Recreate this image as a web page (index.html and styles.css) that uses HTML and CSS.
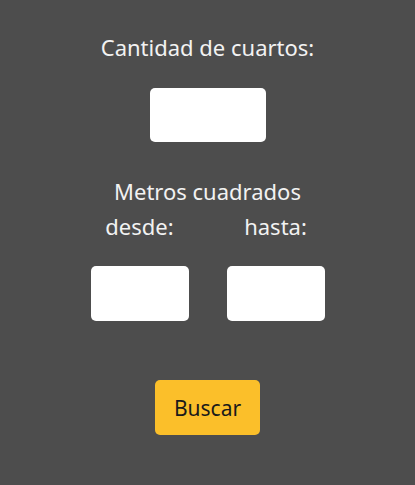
FILE: index.html
```html
<!DOCTYPE html>
<html lang="es">
<head>
<meta charset="utf-8">
<link rel="stylesheet" href="styles.css">
</head>
<body>
<form class="search">
  <label class="label" for="cuartos">Cantidad de cuartos:</label>
  <input class="field field-wide" id="cuartos" type="text">
  <div class="label label-metros">Metros cuadrados</div>
  <div class="range">
    <div class="range-col">
      <label class="label" for="desde">desde:</label>
      <input class="field field-narrow" id="desde" type="text">
    </div>
    <div class="range-col">
      <label class="label" for="hasta">hasta:</label>
      <input class="field field-narrow" id="hasta" type="text">
    </div>
  </div>
  <button class="btn" type="button">Buscar</button>
</form>
</body>
</html>
```
FILE: styles.css
```css
html, body {
  margin: 0;
  padding: 0;
  background: #4d4d4d;
  height: 100%;
}
body {
  font-family: "Noto Sans", "Open Sans", sans-serif;
  color: #f2f2f2;
}
.search {
  display: flex;
  flex-direction: column;
  align-items: center;
  padding-top: 34px;
}
.label {
  font-size: 22px;
  line-height: 26px;
  display: block;
  text-align: center;
}
.field {
  border: none;
  background: #fff;
  border-radius: 5px;
  height: 54px;
  padding: 0;
  box-sizing: border-box;
  outline: none;
}
.field-wide {
  width: 116px;
  margin-top: 28px;
}
.label-metros {
  margin-top: 36px;
}
.range {
  display: flex;
  gap: 38px;
  margin-top: 9px;
}
.range-col {
  display: flex;
  flex-direction: column;
  align-items: center;
}
.field-narrow {
  width: 98px;
  height: 55px;
  margin-top: 27px;
}
.btn {
  margin-top: 59px;
  width: 105px;
  height: 55px;
  border: none;
  border-radius: 5px;
  background: #fbbf2a;
  color: #1a1a1a;
  font-family: inherit;
  font-size: 21px;
  padding: 0;
}
```
